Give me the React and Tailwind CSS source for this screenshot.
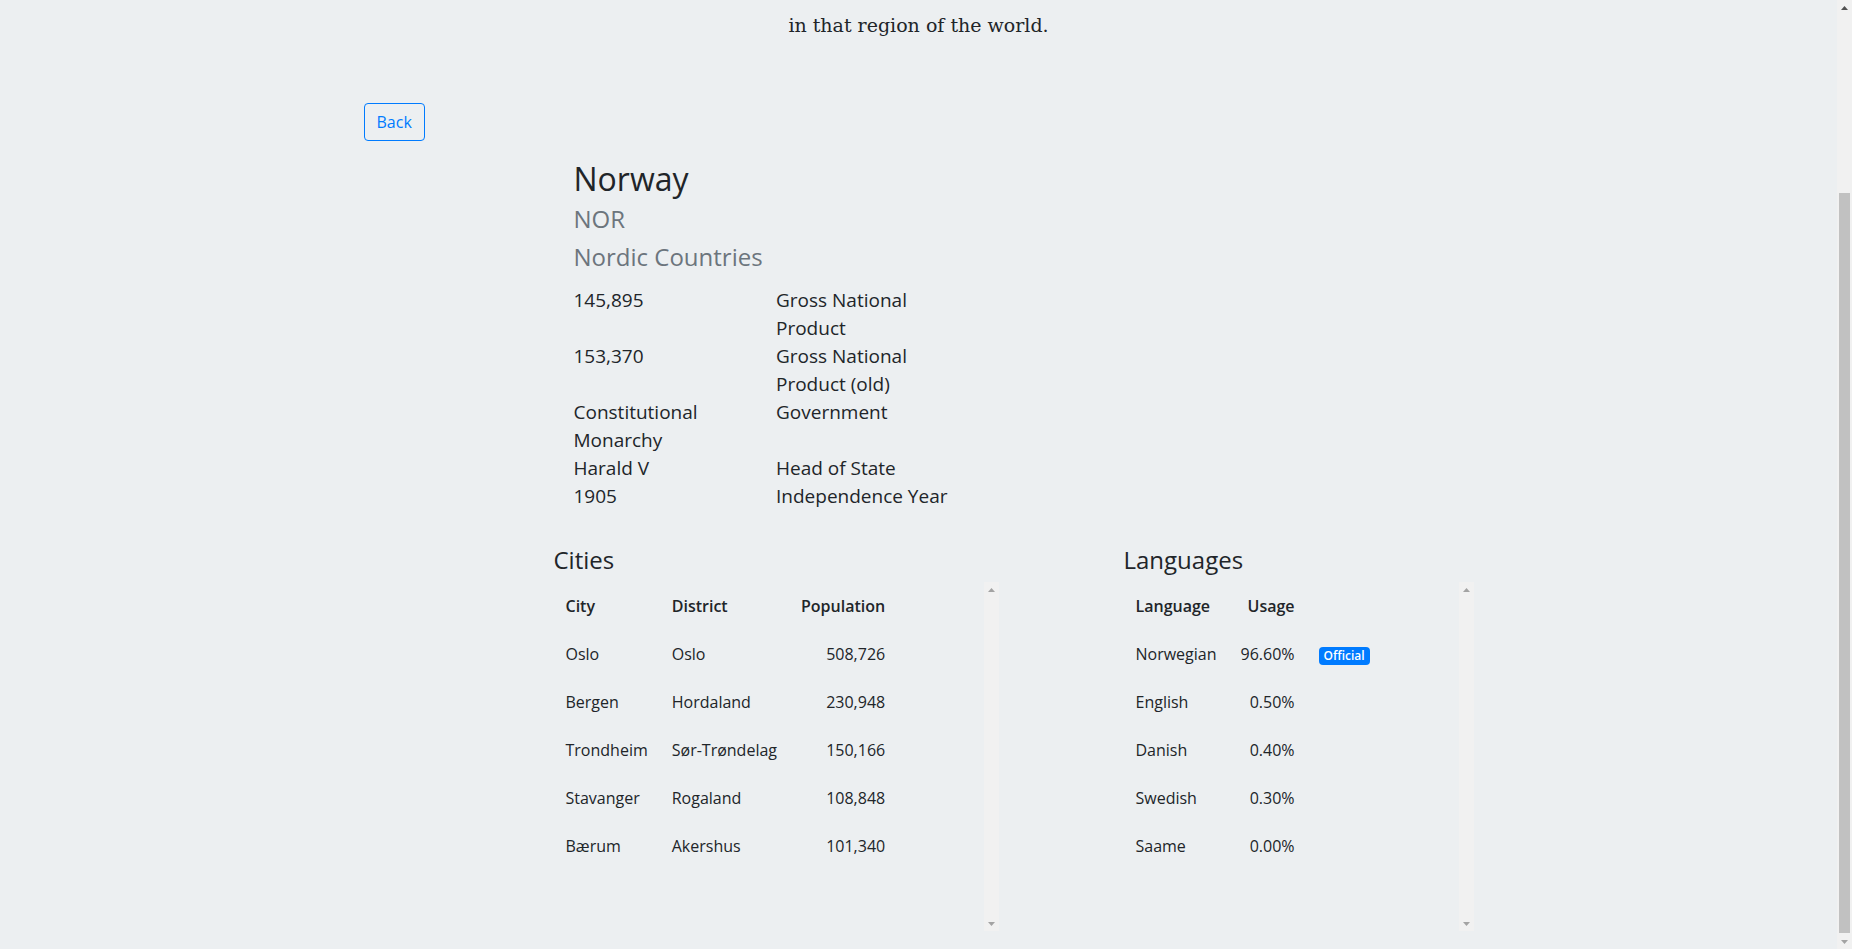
import React from 'react';

const facts = [
  ['145,895', 'Gross National Product'],
  ['153,370', 'Gross National Product (old)'],
  ['Constitutional Monarchy', 'Government'],
  ['Harald V', 'Head of State'],
  ['1905', 'Independence Year'],
];

const cities = [
  { name: 'Oslo', district: 'Oslo', population: '508,726' },
  { name: 'Bergen', district: 'Hordaland', population: '230,948' },
  { name: 'Trondheim', district: 'Sør-Trøndelag', population: '150,166' },
  { name: 'Stavanger', district: 'Rogaland', population: '108,848' },
  { name: 'Bærum', district: 'Akershus', population: '101,340' },
];

const languages = [
  { name: 'Norwegian', usage: '96.60%', official: true },
  { name: 'English', usage: '0.50%' },
  { name: 'Danish', usage: '0.40%' },
  { name: 'Swedish', usage: '0.30%' },
  { name: 'Saame', usage: '0.00%' },
];

const Arrow = ({ down, color }) => (
  <div className="h-[15px] flex items-center justify-center">
    <svg width="7" height="4" viewBox="0 0 7 4">
      <polygon points={down ? '0,0 7,0 3.5,4' : '0,4 7,4 3.5,0'} fill={color} />
    </svg>
  </div>
);

const ScrollStrip = ({ children }) => (
  <div className="w-[15px] shrink-0 bg-[#f1f1f1] flex flex-col">{children}</div>
);

const App = () => {
  return (
    <div className="h-[949px] overflow-hidden flex bg-[#eceff1] text-[#212529] font-['Open_Sans',sans-serif]">
      <main className="flex-1 pt-[10px]">
        <p className="text-center text-[19px] leading-[30px] font-['DejaVu_Serif',serif] text-[#212529]">
          in that region of the world.
        </p>

        <div className="max-w-[1140px] mx-auto px-[15px]">
          <button className="mt-[63px] border border-[#007bff] text-[#007bff] rounded px-3 py-1.5 text-base leading-6">
            Back
          </button>

          {/* Country card */}
          <div className="ml-[190px] w-[445px] px-5">
            <h2 className="mt-[19px] text-[32px] leading-[38px]">Norway</h2>
            <h3 className="mt-[6px] text-[24px] leading-[29px] text-[#6c757d]">NOR</h3>
            <h3 className="mt-[9px] text-[24px] leading-[29px] text-[#6c757d]">Nordic Countries</h3>
            <div className="mt-[15px] grid grid-cols-2 text-[19px] leading-[28px]">
              {facts.map(([value, label]) => (
                <React.Fragment key={label}>
                  <div>{value}</div>
                  <div>{label}</div>
                </React.Fragment>
              ))}
            </div>
          </div>

          <div className="flex ml-[190px] mt-[35px]">
            {/* Cities */}
            <div className="w-[445px]">
              <h4 className="text-[24px] leading-[29px]">Cities</h4>
              <div className="mt-[8px] h-[349px] flex">
                <div className="flex-1">
                  <table className="text-base leading-6">
                    <thead>
                      <tr>
                        <th className="p-3 text-left font-semibold">City</th>
                        <th className="p-3 text-left font-semibold">District</th>
                        <th className="p-3 text-right font-semibold">Population</th>
                      </tr>
                    </thead>
                    <tbody>
                      {cities.map((c) => (
                        <tr key={c.name}>
                          <td className="p-3">{c.name}</td>
                          <td className="p-3">{c.district}</td>
                          <td className="p-3 text-right">{c.population}</td>
                        </tr>
                      ))}
                    </tbody>
                  </table>
                </div>
                <ScrollStrip>
                  <Arrow color="#a3a3a3" />
                  <div className="flex-1" />
                  <Arrow down color="#a3a3a3" />
                </ScrollStrip>
              </div>
            </div>

            {/* Languages */}
            <div className="ml-[125px] w-[350px]">
              <h4 className="text-[24px] leading-[29px]">Languages</h4>
              <div className="mt-[8px] h-[349px] flex">
                <div className="flex-1">
                  <table className="text-base leading-6">
                    <thead>
                      <tr>
                        <th className="p-3 text-left font-semibold">Language</th>
                        <th className="p-3 text-right font-semibold">Usage</th>
                        <th className="p-3" />
                      </tr>
                    </thead>
                    <tbody>
                      {languages.map((l) => (
                        <tr key={l.name}>
                          <td className="p-3">{l.name}</td>
                          <td className="p-3 text-right">{l.usage}</td>
                          <td className="p-3">
                            {l.official && (
                              <span className="inline-block bg-[#007bff] text-white text-[12px] font-semibold leading-none px-[5px] py-[3px] rounded align-baseline">
                                Official
                              </span>
                            )}
                          </td>
                        </tr>
                      ))}
                    </tbody>
                  </table>
                </div>
                <ScrollStrip>
                  <Arrow color="#a3a3a3" />
                  <div className="flex-1" />
                  <Arrow down color="#a3a3a3" />
                </ScrollStrip>
              </div>
            </div>
          </div>
        </div>
      </main>

      {/* window scrollbar, scrolled to the bottom */}
      <ScrollStrip>
        <Arrow color="#505050" />
        <div className="flex-1 flex flex-col">
          <div className="h-[178px]" />
          <div className="h-[740px] mx-[2px] bg-[#c1c1c1]" />
        </div>
        <Arrow down color="#a3a3a3" />
      </ScrollStrip>
    </div>
  );
};

export default App;
